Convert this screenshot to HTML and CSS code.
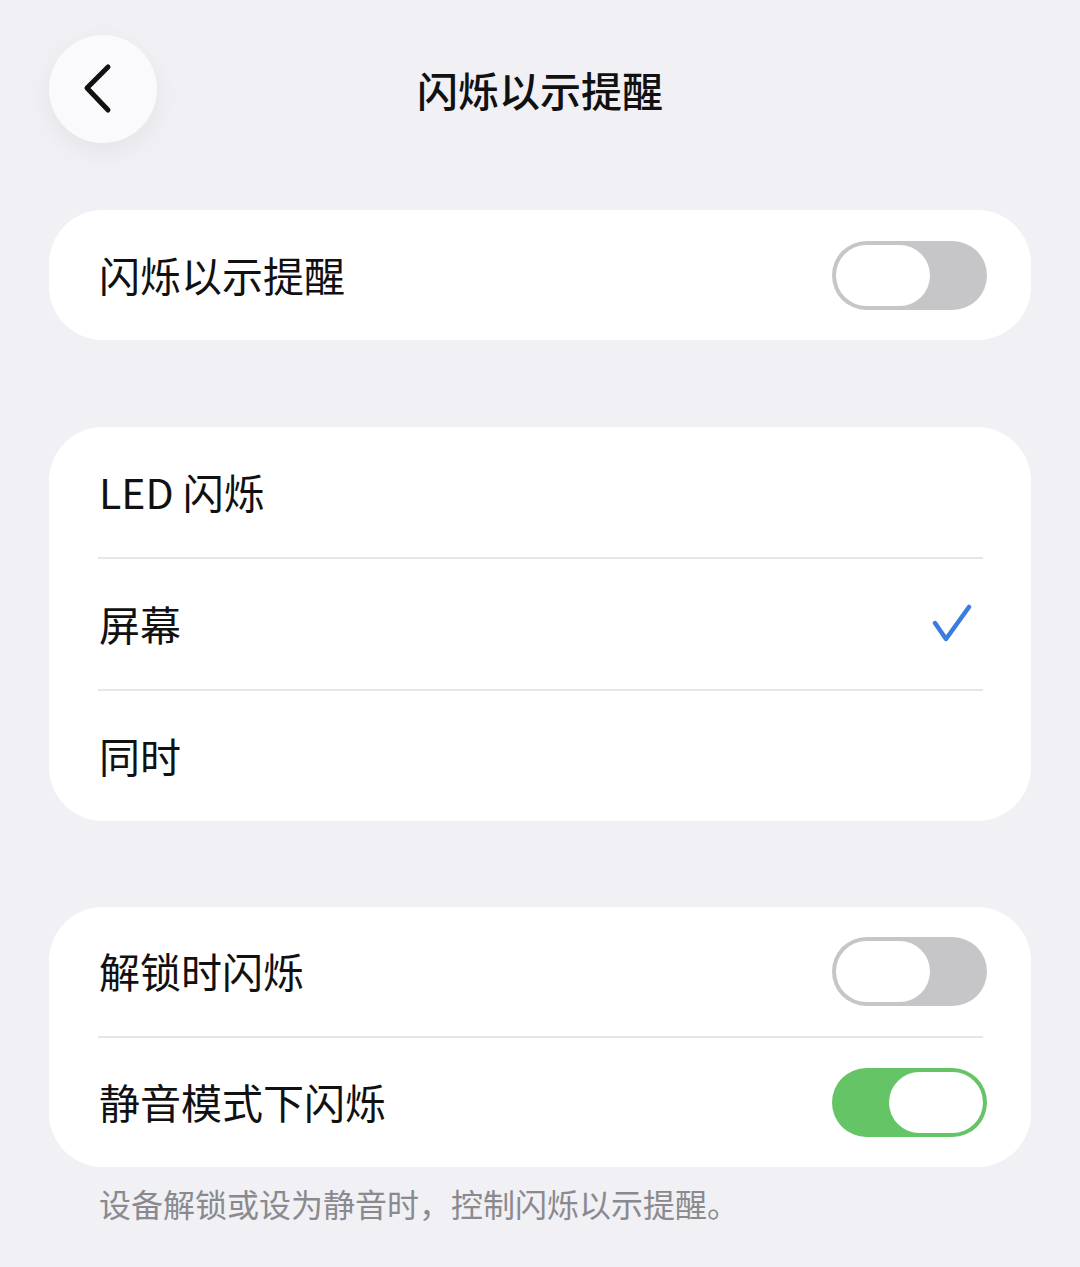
FILE: index.html
```html
<!DOCTYPE html>
<html lang="zh-CN">
<head>
  <meta charset="UTF-8" />
  <meta name="viewport" content="width=device-width, initial-scale=1.0" />
  <title>闪烁以示提醒</title>
  <link rel="stylesheet" href="styles.css">
</head>
<body>

  <header class="topbar">
    <button class="back" type="button" aria-label="返回">
      <svg width="40" height="56" viewBox="0 0 40 56">
        <path d="M27 6 L6 27 L27 49" fill="none" stroke="#111" stroke-width="5" stroke-linecap="round" stroke-linejoin="round" />
      </svg>
    </button>
    <h1>闪烁以示提醒</h1>
    <span></span>
  </header>

  <main>
    <section class="card first">
      <div class="row">
        <span class="label">闪烁以示提醒</span>
        <span class="switch"><span class="knob"></span></span>
      </div>
    </section>

    <section class="card">
      <div class="row">
        <span class="label">LED 闪烁</span>
      </div>
      <div class="sep"></div>
      <div class="row">
        <span class="label">屏幕</span>
        <svg class="check" width="40" height="40" viewBox="0 0 40 40">
          <path d="M3 19 L14 35 L37 3" fill="none" stroke="#3a7ddf" stroke-width="4.5" stroke-linecap="round" stroke-linejoin="round" />
        </svg>
      </div>
      <div class="sep"></div>
      <div class="row">
        <span class="label">同时</span>
      </div>
    </section>

    <section class="card last">
      <div class="row">
        <span class="label">解锁时闪烁</span>
        <span class="switch"><span class="knob"></span></span>
      </div>
      <div class="sep"></div>
      <div class="row">
        <span class="label">静音模式下闪烁</span>
        <span class="switch on"><span class="knob"></span></span>
      </div>
    </section>

    <p class="note">设备解锁或设为静音时，控制闪烁以示提醒。</p>
  </main>

</body>
</html>
```

FILE: styles.css
```css
body {
  margin: 0;
  background: #f0f0f5;
  font-family: "Noto Sans CJK SC", "Noto Sans", sans-serif;
  color: #111;
}

.topbar {
  display: grid;
  grid-template-columns: 108px 1fr 108px;
  align-items: center;
  padding: 35px 49px 0;
}

.back {
  width: 108px;
  height: 108px;
  border-radius: 50%;
  border: none;
  background: #fafafc;
  box-shadow: 0 8px 28px rgba(0, 0, 0, 0.06);
  display: flex;
  align-items: center;
  justify-content: center;
  padding: 0 4px 0 0;
  cursor: pointer;
}

.topbar h1 {
  margin: 0;
  text-align: center;
  font-size: 41px;
  font-weight: 500;
  line-height: 1;
}

main {
  padding: 0 49px;
}

.card {
  background: white;
  border-radius: 54px;
  margin-top: 87px;
}

.card.first {
  margin-top: 67px;
}

.card.last {
  margin-top: 86px;
}

.card.last .row {
  height: 129px;
}

.row {
  height: 130px;
  display: flex;
  align-items: center;
  justify-content: space-between;
  padding: 0 44px 0 50px;
}

.label {
  font-size: 41px;
  line-height: 1;
  margin-top: -2px;
}

.sep {
  height: 2px;
  background: #e6e6ea;
  margin: 0 48px 0 49px;
}

.check {
  margin-right: 15px;
}

.switch {
  width: 155px;
  height: 69px;
  box-sizing: border-box;
  padding: 4px;
  border-radius: 35px;
  background: #c6c6c9;
  display: flex;
  justify-content: flex-start;
}

.switch.on {
  background: #65c466;
  justify-content: flex-end;
}

.knob {
  width: 94px;
  height: 61px;
  border-radius: 31px;
  background: white;
}

.note {
  margin: 16px 0 0 50px;
  font-size: 32px;
  line-height: 40px;
  color: #8a8a8e;
}
```
